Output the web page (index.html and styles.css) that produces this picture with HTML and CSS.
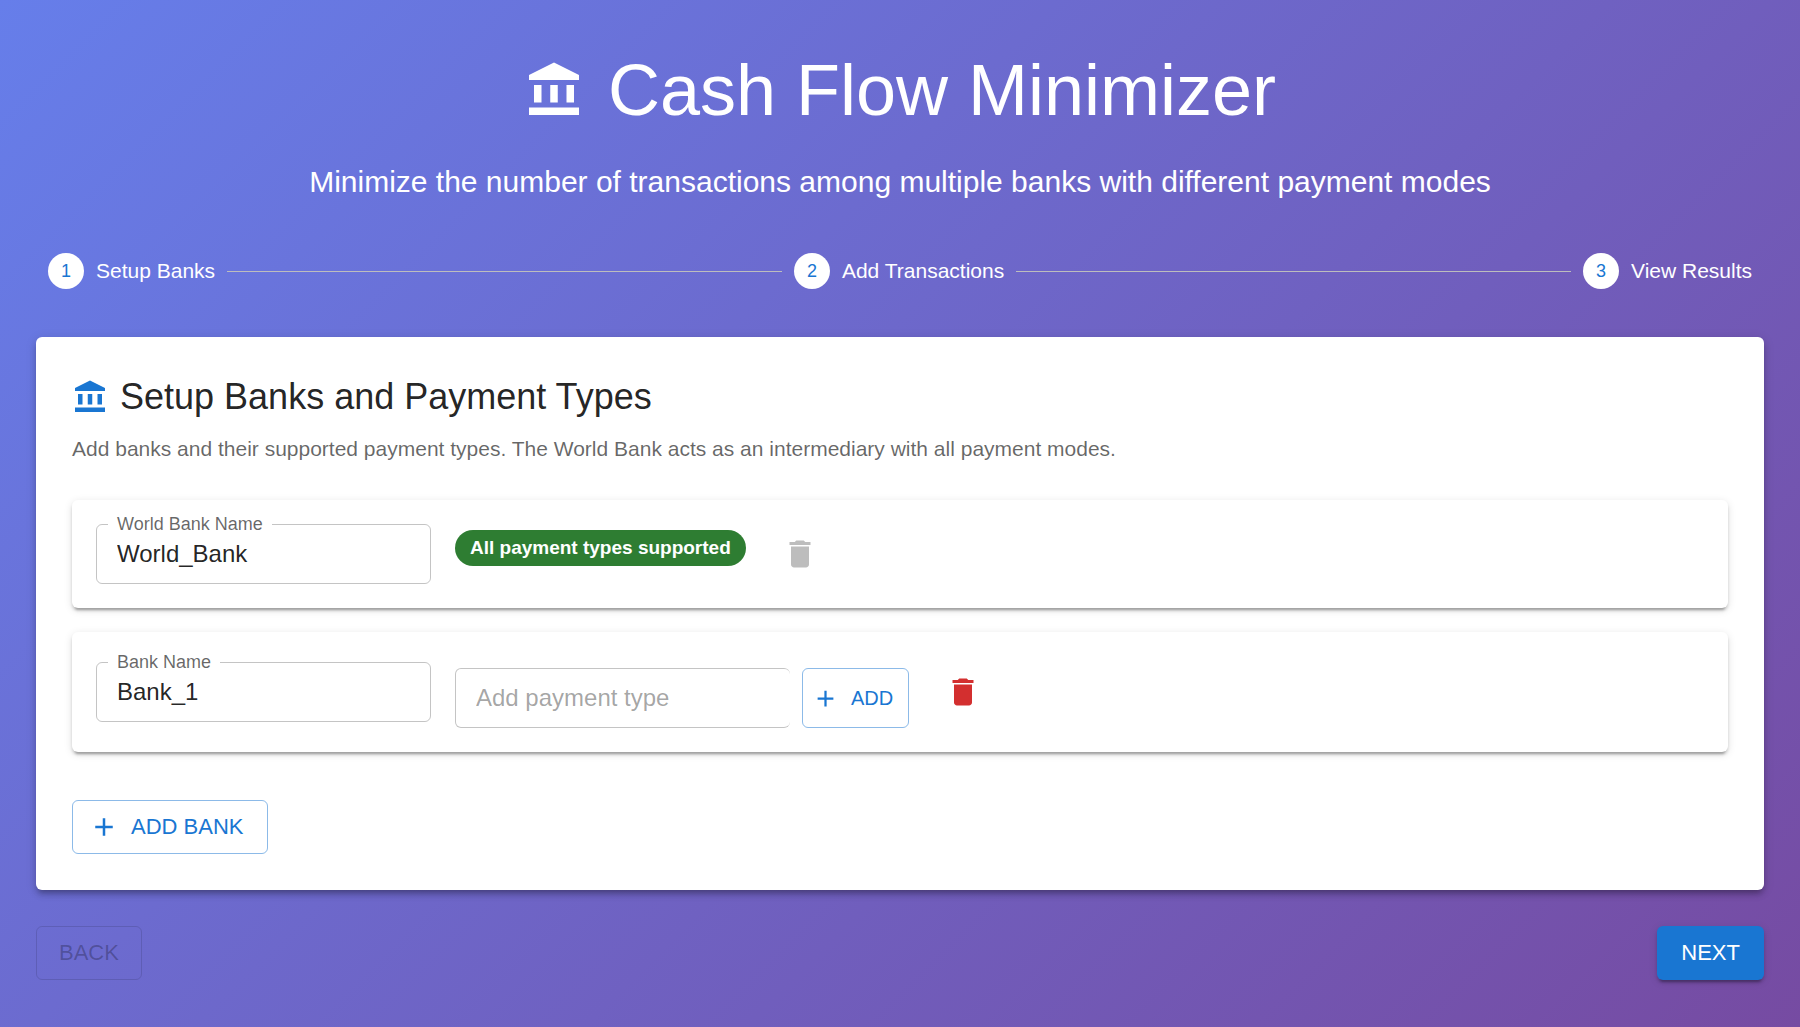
FILE: index.html
```html
<!DOCTYPE html>
<html lang="en">
<head>
<meta charset="utf-8">
<meta name="viewport" content="width=device-width, initial-scale=1">
<title>Cash Flow Minimizer</title>
<link rel="stylesheet" href="styles.css">
</head>
<body>
<svg class="sprite" aria-hidden="true">
  <symbol id="icon-bank" viewBox="0 0 24 24"><path d="M4 10h3v7H4zM10.500 10h3v7h-3zM2 19h20v3H2zM17 10h3v7h-3zM12 1 2 6v2h20V6z"/></symbol>
  <symbol id="icon-delete" viewBox="0 0 24 24"><path d="M6 19c0 1.100.9 2 2 2h8c1.100 0 2-.9 2-2V7H6v12zM19 4h-3.500l-1-1h-5l-1 1H5v2h14V4z"/></symbol>
  <symbol id="icon-add" viewBox="0 0 24 24"><path d="M19 13h-6v6h-2v-6H5v-2h6V5h2v6h6v2z"/></symbol>
</svg>
<div class="page">
  <header class="header">
    <h1 class="title"><svg class="title-icon" aria-hidden="true"><use href="#icon-bank"/></svg>Cash Flow Minimizer</h1>
    <p class="subtitle">Minimize the number of transactions among multiple banks with different payment modes</p>
  </header>

  <ol class="stepper">
    <li class="step"><span class="step-number">1</span><span>Setup Banks</span></li>
    <li class="connector" aria-hidden="true"></li>
    <li class="step"><span class="step-number">2</span><span>Add Transactions</span></li>
    <li class="connector" aria-hidden="true"></li>
    <li class="step"><span class="step-number">3</span><span>View Results</span></li>
  </ol>

  <main class="panel">
    <h2 class="panel-title"><svg class="panel-icon" aria-hidden="true"><use href="#icon-bank"/></svg>Setup Banks and Payment Types</h2>
    <p class="panel-text">Add banks and their supported payment types. The World Bank acts as an intermediary with all payment modes.</p>

    <div class="bank-list">
      <section class="bank">
        <div class="field">
          <label class="field-label" for="world-bank">World Bank Name</label>
          <input class="field-input" id="world-bank" type="text" value="World_Bank">
        </div>
        <div class="chip-list"><span class="chip">All payment types supported</span></div>
        <button class="icon-button" type="button" aria-label="Delete World_Bank" disabled><svg class="icon" aria-hidden="true"><use href="#icon-delete"/></svg></button>
      </section>

      <section class="bank">
        <div class="field">
          <label class="field-label" for="bank-1">Bank Name</label>
          <input class="field-input" id="bank-1" type="text" value="Bank_1">
        </div>
        <div class="payment">
          <div class="field">
            <input class="field-input field-input-open" type="text" placeholder="Add payment type" aria-label="Add payment type">
          </div>
          <button class="button button-outlined button-add" type="button"><svg class="add-icon" aria-hidden="true"><use href="#icon-add"/></svg>ADD</button>
        </div>
        <button class="icon-button" type="button" aria-label="Delete Bank_1"><svg class="icon" aria-hidden="true"><use href="#icon-delete"/></svg></button>
      </section>
    </div>

    <button class="button button-outlined button-large button-add-bank" type="button"><svg class="add-icon-large" aria-hidden="true"><use href="#icon-add"/></svg>ADD BANK</button>
  </main>

  <nav class="actions" aria-label="Steps">
    <button class="button button-outlined button-large" type="button" disabled>BACK</button>
    <button class="button button-primary button-large" type="button">NEXT</button>
  </nav>
</div>
</body>
</html>
```
FILE: styles.css
```css
* {
  box-sizing: border-box;
}

body {
  margin: 0;
  font-family: "Liberation Sans", Arial, sans-serif;
  font-size: 21px;
  line-height: 30px;
  color: rgba(0, 0, 0, 0.87);
}

svg {
  display: block;
  flex: none;
  fill: currentColor;
}

.sprite {
  position: absolute;
  width: 0;
  height: 0;
}

.page {
  min-height: 100vh;
  padding: 48px 36px;
  background: linear-gradient(135deg, #667eea 0%, #764ba2 100%);
}

.header {
  margin-bottom: 47px;
  color: #fff;
  text-align: center;
}

.title {
  display: flex;
  align-items: center;
  justify-content: center;
  gap: 24px;
  margin: 0 0 26px;
  font-size: 72px;
  font-weight: 400;
  line-height: 84px;
}

.title-icon {
  width: 60px;
  height: 60px;
}

.subtitle {
  margin: 0;
  font-size: 30px;
  line-height: 48px;
}

.stepper {
  display: flex;
  align-items: center;
  margin: 0 0 48px;
  padding: 0;
  list-style: none;
}

.step {
  display: flex;
  align-items: center;
  gap: 12px;
  padding: 0 12px;
  color: #fff;
}

.step-number {
  width: 36px;
  height: 36px;
  border-radius: 50%;
  background: #fff;
  color: #1976d2;
  font-size: 18px;
  line-height: 36px;
  text-align: center;
}

.connector {
  flex: 1;
  height: 1px;
  background: #bdbdbd;
}

.panel {
  padding: 36px;
  border-radius: 6px;
  background: #fff;
  box-shadow:
    0 5px 5px -3px rgba(0, 0, 0, 0.2),
    0 5px 6px rgba(0, 0, 0, 0.14),
    0 2px 12px rgba(0, 0, 0, 0.12);
}

.panel-title {
  display: flex;
  align-items: center;
  gap: 12px;
  margin: 0 0 13px;
  font-size: 36px;
  font-weight: 400;
  line-height: 48px;
}

.panel-icon {
  width: 36px;
  height: 36px;
  color: #1976d2;
}

.panel-text {
  margin: 0;
  color: rgba(0, 0, 0, 0.6);
}

.bank-list {
  display: grid;
  gap: 24px;
  margin: 36px 0 48px;
}

.bank {
  display: flex;
  align-items: center;
  gap: 24px;
  padding: 24px;
  border-radius: 6px;
  box-shadow:
    0 5px 2px -3px rgba(0, 0, 0, 0.2),
    0 3px 3px rgba(0, 0, 0, 0.14),
    0 2px 8px rgba(0, 0, 0, 0.12);
}

.field {
  position: relative;
  width: 335px;
}

.field-label {
  position: absolute;
  top: -10px;
  left: 12px;
  padding: 0 9px;
  background: #fff;
  color: rgba(0, 0, 0, 0.6);
  font-size: 18px;
  line-height: 20px;
}

.field-input {
  display: block;
  width: 100%;
  height: 60px;
  padding: 0 20px;
  border: 1px solid rgba(0, 0, 0, 0.23);
  border-radius: 6px;
  background: transparent;
  color: inherit;
  font: inherit;
  font-size: 24px;
}

.field-input::placeholder {
  color: rgba(0, 0, 0, 0.37);
  opacity: 1;
}

.field-input-open {
  border-right-width: 0;
}

.chip-list {
  padding-bottom: 12px;
}

.chip {
  display: block;
  padding: 0 15px;
  border-radius: 18px;
  background: #2e7d32;
  color: #fff;
  font-size: 19px;
  font-weight: 700;
  line-height: 36px;
}

.payment {
  display: flex;
  gap: 12px;
  padding-top: 12px;
}

.icon-button {
  padding: 12px;
  border: 0;
  background: none;
  color: #d32f2f;
}

.icon-button:disabled {
  color: rgba(0, 0, 0, 0.26);
}

.icon {
  width: 36px;
  height: 36px;
}

.button {
  display: flex;
  align-items: center;
  gap: 12px;
  border: 0;
  border-radius: 6px;
  background: none;
  color: #1976d2;
  font: inherit;
}

.button-outlined {
  border: 1px solid rgba(25, 118, 210, 0.5);
}

.button-outlined:disabled {
  border-color: rgba(0, 0, 0, 0.12);
  color: rgba(0, 0, 0, 0.26);
}

.button-add {
  padding: 0 15px 0 9px;
  font-size: 20px;
}

.button-large {
  height: 54px;
  padding: 0 22px;
  font-size: 22px;
}

.button-add-bank {
  padding: 0 24px 0 16px;
}

.button-primary {
  padding: 0 24px;
  background: #1976d2;
  color: #fff;
  box-shadow:
    0 5px 2px -3px rgba(0, 0, 0, 0.2),
    0 3px 3px rgba(0, 0, 0, 0.14),
    0 2px 8px rgba(0, 0, 0, 0.12);
}

.add-icon {
  width: 27px;
  height: 27px;
}

.add-icon-large {
  width: 30px;
  height: 30px;
}

.actions {
  display: flex;
  justify-content: space-between;
  margin-top: 36px;
}
```
